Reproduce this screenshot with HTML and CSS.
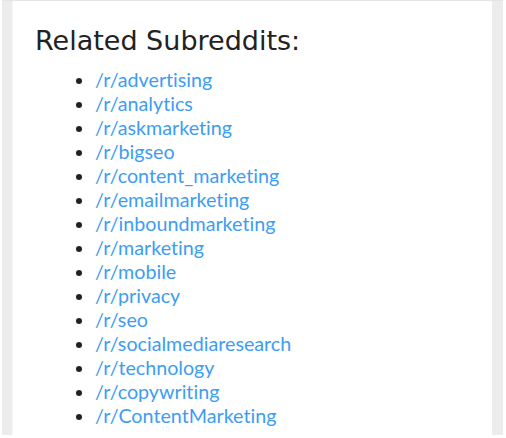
FILE: index.html
```html
<!DOCTYPE html>
<html lang="en">
<head>
	<meta charset="UTF-8">
	<title>Related Subreddits</title>
	<link rel="stylesheet" href="styles.css">
</head>
<body>
	<div class="side">
		<div class="box">
			<h3>Related Subreddits:</h3>
			<ul class="subs">
				<li><a href="#">/r/advertising</a></li>
				<li><a href="#">/r/analytics</a></li>
				<li><a href="#">/r/askmarketing</a></li>
				<li><a href="#">/r/bigseo</a></li>
				<li><a href="#">/r/content_marketing</a></li>
				<li><a href="#">/r/emailmarketing</a></li>
				<li><a href="#">/r/inboundmarketing</a></li>
				<li><a href="#">/r/marketing</a></li>
				<li><a href="#">/r/mobile</a></li>
				<li><a href="#">/r/privacy</a></li>
				<li><a href="#">/r/seo</a></li>
				<li><a href="#">/r/socialmediaresearch</a></li>
				<li><a href="#">/r/technology</a></li>
				<li><a href="#">/r/copywriting</a></li>
				<li><a href="#">/r/ContentMarketing</a></li>
			</ul>
		</div>
	</div>
</body>
</html>
```

FILE: styles.css
```css
*{margin: 0;padding: 0;}
body {
	background: #fff;
	height: 438px;
	overflow: hidden;
}
.side {
	margin: 0 3px 0 2px;
	height: 434px;
	background: #ececec;
	border-top: 1px solid #e4e4e4;
	padding: 0 11px 0 10px;
}
.box {
	background: #fff;
	height: 100%;
	padding: 0 22px;
	border-left: 1px solid #f6f6f6;
}
.box h3 {
	font-family: "DejaVu Sans", Verdana, sans-serif;
	font-weight: normal;
	font-size: 27px;
	color: #222;
	padding-top: 24px;
	line-height: 32px;
}
.subs {
	margin-top: 11px;
	padding-left: 60px;
	font-family: Lato, "Open Sans", sans-serif;
	font-size: 19.7px;
	line-height: 24px;
	color: #222;
	font-variant-ligatures: none;
}
.subs a {
	color: #3d9df2;
	text-decoration: none;
}
```
